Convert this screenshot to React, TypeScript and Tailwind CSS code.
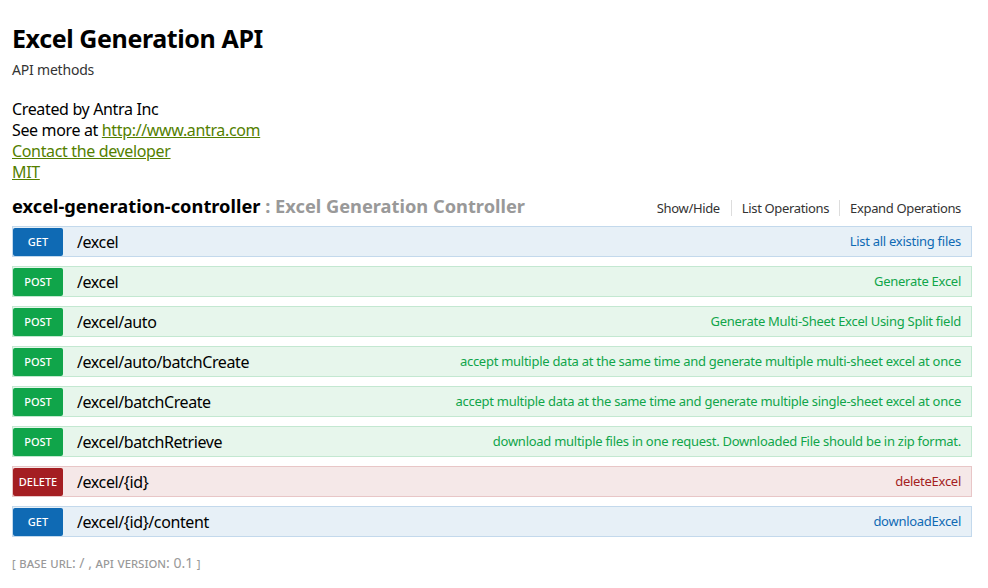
type Op = { method: "GET" | "POST" | "DELETE"; path: string; summary: string }

const OPS: Op[] = [
  { method: "GET", path: "/excel", summary: "List all existing files" },
  { method: "POST", path: "/excel", summary: "Generate Excel" },
  { method: "POST", path: "/excel/auto", summary: "Generate Multi-Sheet Excel Using Split field" },
  {
    method: "POST",
    path: "/excel/auto/batchCreate",
    summary: "accept multiple data at the same time and generate multiple multi-sheet excel at once",
  },
  {
    method: "POST",
    path: "/excel/batchCreate",
    summary: "accept multiple data at the same time and generate multiple single-sheet excel at once",
  },
  {
    method: "POST",
    path: "/excel/batchRetrieve",
    summary: "download multiple files in one request. Downloaded File should be in zip format.",
  },
  { method: "DELETE", path: "/excel/{id}", summary: "deleteExcel" },
  { method: "GET", path: "/excel/{id}/content", summary: "downloadExcel" },
]

const STYLES = {
  GET: { row: "bg-[#e7f0f7] border-[#c3d9ec]", badge: "bg-[#0f6ab4]", text: "text-[#0f6ab4]" },
  POST: { row: "bg-[#e7f6ec] border-[#c3e8d1]", badge: "bg-[#10a54a]", text: "text-[#10a54a]" },
  DELETE: { row: "bg-[#f5e8e8] border-[#e8c6c7]", badge: "bg-[#a41e22]", text: "text-[#a41e22]" },
}

function Operation({ op }: { op: Op }) {
  const s = STYLES[op.method]
  return (
    <li className={`flex h-[31px] items-center border ${s.row}`}>
      <span
        className={`flex h-[28px] w-[50px] items-center justify-center rounded-[2px] pt-[2px] text-[11px] font-medium text-white ${s.badge}`}
      >
        {op.method}
      </span>
      <span className="ml-[14px] text-[16px] tracking-[-0.4px] text-black">{op.path}</span>
      <span className={`ml-auto pr-[10px] text-[13px] tracking-[-0.27px] ${s.text}`}>{op.summary}</span>
    </li>
  )
}

export default function App() {
  return (
    <div className="min-h-[588px] bg-white pl-3 pr-4 pt-[20px] font-['Noto_Sans',sans-serif] text-[#222]">
      <h1 className="text-[25px] leading-[36px] font-bold tracking-[-0.4px] text-black">Excel Generation API</h1>
      <p className="mt-[4px] text-[14px] leading-[20px] tracking-[-0.2px] text-[#333]">API methods</p>
      <div className="mt-[19px] text-[16px] leading-[21px] tracking-[-0.35px] text-black">
        <div>Created by Antra Inc</div>
        <div>
          See more at{" "}
          <a href="#" className="text-[#547f00] underline">
            http://www.antra.com
          </a>
        </div>
        <div>
          <a href="#" className="text-[#547f00] underline">
            Contact the developer
          </a>
        </div>
        <div>
          <a href="#" className="text-[#547f00] underline">
            MIT
          </a>
        </div>
      </div>

      <div className="mt-[10px] flex items-center">
        <h2 className="text-[18.25px] leading-[26px] font-bold text-black">
          excel-generation-controller <span className="text-[#999]">: Excel Generation Controller</span>
        </h2>
        <ul className="ml-auto mr-[11px] mt-[3px] flex items-center text-[13px] tracking-[-0.35px] text-[#333]">
          <li className="border-r border-[#ddd] pr-[11px] leading-[16px]">Show/Hide</li>
          <li className="border-r border-[#ddd] px-[10px] leading-[16px]">List Operations</li>
          <li className="pl-[10px] leading-[16px]">Expand Operations</li>
        </ul>
      </div>

      <ul className="mt-[7px] flex flex-col gap-[9px]">
        {OPS.map((op, i) => (
          <Operation key={i} op={op} />
        ))}
      </ul>

      <p className="mt-[15px] text-[14px] text-[#999] [font-variant:small-caps]">
        [ base url: / , api version: 0.1 ]
      </p>
    </div>
  )
}
